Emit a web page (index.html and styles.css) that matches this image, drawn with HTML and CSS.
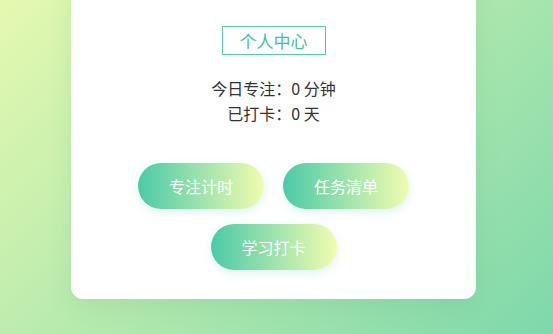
FILE: index.html
```html
<!DOCTYPE html>
<html lang="zh-CN">
<head>
<meta charset="utf-8">
<title>个人中心</title>
<link rel="stylesheet" href="styles.css">
</head>
<body>
<main class="page">
  <section class="card">
    <h1 class="title">个人中心</h1>
    <div class="stats">
      <p class="stat">今日专注：0 分钟</p>
      <p class="stat">已打卡：0 天</p>
    </div>
    <nav class="actions">
      <button class="btn">专注计时</button>
      <button class="btn">任务清单</button>
      <button class="btn">学习打卡</button>
    </nav>
  </section>
</main>
</body>
</html>
```
FILE: styles.css
```css
html, body {
  margin: 0;
  padding: 0;
  height: 100%;
}
body {
  font-family: "Noto Sans CJK SC", "Noto Sans", sans-serif;
  background: linear-gradient(135deg, #e5f9b0 0%, #7ed8ab 100%);
  overflow: hidden;
}
.page {
  display: flex;
  justify-content: center;
  padding-right: 6px;
}
.card {
  width: 405px;
  margin-top: -20px;
  padding: 46px 0 29px;
  background: #fff;
  border-radius: 12px;
  box-shadow: 0 6px 24px rgba(60, 140, 100, 0.12);
  display: flex;
  flex-direction: column;
  align-items: center;
}
.title {
  margin: 0;
  padding: 0 17px;
  border: 1px solid #5cc8ae;
  color: #47bea2;
  font-size: 17px;
  font-weight: 400;
  line-height: 27px;
}
.stats {
  margin-top: 21px;
  text-align: center;
}
.stat {
  margin: 0;
  font-size: 16px;
  line-height: 25px;
  color: #333;
}
.actions {
  margin-top: 37px;
  width: 290px;
  display: flex;
  flex-wrap: wrap;
  justify-content: center;
  gap: 15px 19px;
}
.btn {
  width: 126px;
  height: 46px;
  border: none;
  border-radius: 23px;
  background: linear-gradient(to right, #4ccaa9 0%, #f1fcb0 100%);
  color: #fff;
  font-family: inherit;
  font-size: 16px;
  box-shadow: 0 3px 10px rgba(80, 200, 170, 0.2);
  padding: 0;
  cursor: pointer;
}
```
